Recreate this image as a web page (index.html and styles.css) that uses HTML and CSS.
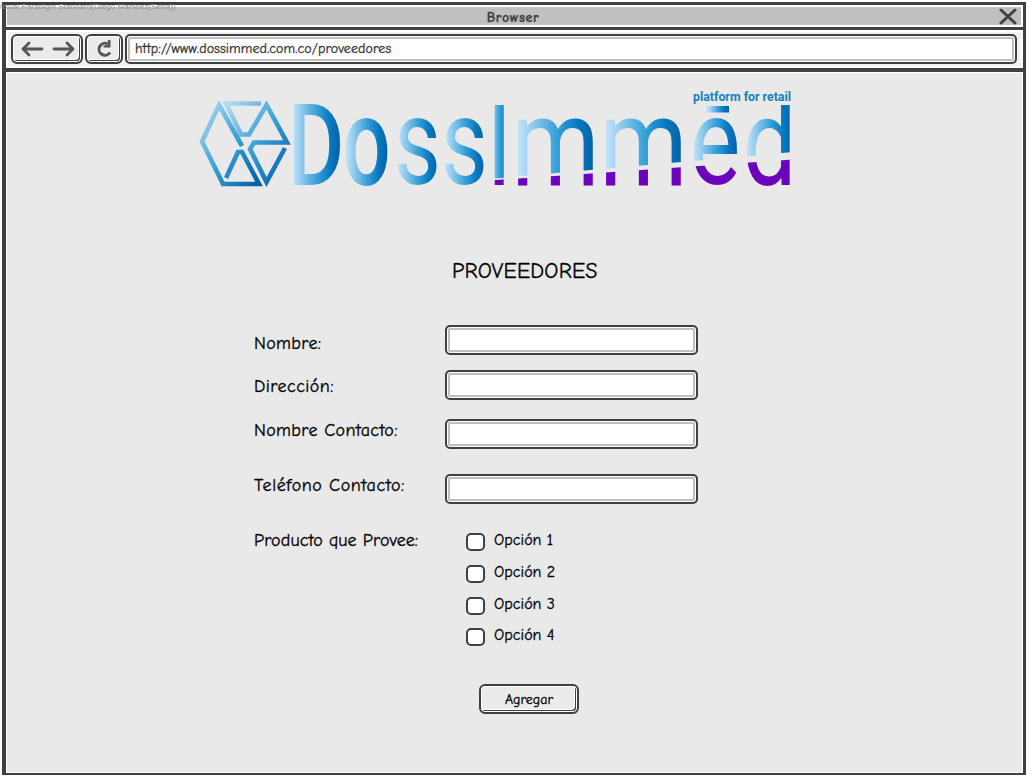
FILE: index.html
```html
<!DOCTYPE html>
<html lang="es">
<head>
<meta charset="utf-8">
<title>Proveedores</title>
<link rel="stylesheet" href="styles.css">
</head>
<body>
<div class="watermark">Visual Paradigm Standard(Diego Martinez(Sena))</div>
<div class="window">
  <header class="titlebar">
    <span class="title">Browser</span>
    <svg class="close" width="18" height="17" viewBox="0 0 18 17"><path d="M2 2L16 15M16 2L2 15"/></svg>
  </header>
  <nav class="toolbar">
    <div class="tool history">
      <svg width="54" height="16" viewBox="0 0 54 16"><path d="M21 8H2M8 2L2 8L8 14M33 8H52M46 2L52 8L46 14"/></svg>
    </div>
    <div class="tool reload">
      <svg width="18" height="18" viewBox="0 0 18 18"><path class="arc" d="M12.500 3.800A6 6 0 1 0 15 12.500"/><path class="tip" d="M15.500 0V7.500H8.500V5.500L12.500 5L13 0Z"/></svg>
    </div>
    <div class="address"><span class="url">http://www.dossimmed.com.co/proveedores</span></div>
  </nav>
  <main class="page">
    <svg class="logo" width="600" height="100" viewBox="196 90 600 100">
      <defs>
        <linearGradient id="ink"><stop offset=".1" stop-color="#bfe0f7"/><stop offset=".5" stop-color="#3ba3da"/><stop offset=".75" stop-color="#0878c0"/><stop offset="1" stop-color="#005a9e"/></linearGradient>
        <linearGradient id="edge" x1="0" y1="0" x2="1" y2="1"><stop offset="0" stop-color="#b5dbf3"/><stop offset=".5" stop-color="#3ba0d7"/><stop offset="1" stop-color="#005da5"/></linearGradient>
        <clipPath id="upper"><path d="M280 105H800V151.500L495 178.500L280 190Z"/></clipPath>
        <clipPath id="lower"><path d="M490 180.500L800 159V190H490Z"/></clipPath>
      </defs>
      <g class="emblem" stroke="url(#edge)">
        <path d="M242 146L219 105L202 141.500L223 184H259L242 152H238L226 178"/>
        <path d="M261 103.500H226L241 134.500H249L266.500 105L287 142.500H254L250 149L266.500 182L285 148"/>
      </g>
      <g class="word" fill="url(#ink)">
        <text class="heavy" transform="translate(287.500 185) scale(.87 1.125)">D</text>
        <text class="heavy" transform="translate(342.300 184.800) scale(.851 1.250)">o</text>
        <text transform="translate(393.800 184) scale(.915 1.220)">s</text>
        <text transform="translate(440.800 184) scale(.915 1.220)">s</text>
        <g clip-path="url(#upper)">
          <text id="l1" transform="translate(486.200 185) scale(.95 1.125)">I</text>
          <text id="l2" transform="translate(511.200 185) scale(1.008 1.245)">m</text>
          <text id="l3" transform="translate(599.200 185) scale(1.008 1.245)">m</text>
          <text id="l4" transform="translate(689.600 184) scale(.96 1.220)">e</text>
          <text id="l5" transform="translate(742.600 184.500) scale(.958 1.220)">d</text>
        </g>
        <rect x="706" y="106" width="23" height="6.500"/>
      </g>
      <g class="word" fill="#6a05bd" clip-path="url(#lower)">
        <use href="#l1"/><use href="#l2"/><use href="#l3"/><use href="#l4"/><use href="#l5"/>
      </g>
      <text class="tagline" x="693" y="101" textLength="98" lengthAdjust="spacingAndGlyphs">platform for retail</text>
    </svg>
    <h1 class="heading">PROVEEDORES</h1>
    <form class="form">
      <label class="label nombre">Nombre:</label><div class="field"></div>
      <label class="label direccion">Dirección:</label><div class="field"></div>
      <label class="label contacto">Nombre Contacto:</label><div class="field"></div>
      <label class="label telefono">Teléfono Contacto:</label><div class="field"></div>
      <span class="label producto">Producto que Provee:</span>
      <div class="options">
        <div class="option"><i class="box"></i><span>Opción 1</span></div>
        <div class="option"><i class="box"></i><span>Opción 2</span></div>
        <div class="option"><i class="box"></i><span>Opción 3</span></div>
        <div class="option"><i class="box"></i><span>Opción 4</span></div>
      </div>
    </form>
    <div class="submit"><span>Agregar</span></div>
  </main>
</div>
</body>
</html>
```
FILE: styles.css
```css
* { box-sizing: border-box; }
body {
  margin: 0;
  width: 1030px;
  height: 779px;
  padding: 2px 4px 4px 2px;
  overflow: hidden;
  background: #fff;
  color: #000;
  font-family: "Comic Sans MS", "Comic Neue", "Noto Sans", sans-serif;
  -webkit-text-stroke: .3px currentColor;
}
.watermark {
  position: absolute;
  left: -3px;
  top: 2px;
  font: 8px/10px "Liberation Sans", sans-serif;
  letter-spacing: .06px;
  -webkit-text-stroke: 0;
  color: #929292;
  white-space: nowrap;
}
.window {
  width: 1024px;
  height: 773px;
  border: solid #404040;
  border-width: 3px 3px 2px 4px;
  display: flex;
  flex-direction: column;
}
.titlebar {
  height: 22px;
  flex: none;
  border: solid #fff;
  border-width: 2px 2px 2px 1px;
  background: #c0c0c0;
  display: flex;
  justify-content: center;
  align-items: center;
}
.title {
  margin-left: auto;
  padding: 3px 0 0 20px;
  font-size: 14px;
  font-weight: 700;
  line-height: 18px;
  letter-spacing: .6px;
  color: #404040;
}
.close { margin: 0 4px 0 auto; }
.close path { stroke: #404040; stroke-width: 3; stroke-linecap: round; fill: none; }
.toolbar {
  height: 45px;
  flex: none;
  border-top: 3px solid #404040;
  border-bottom: 4px solid #404040;
  background: #f1f1f1;
  box-shadow: inset 0 0 0 2px #fff;
  padding: 4px 6px 0 5px;
  display: flex;
  gap: 2px;
}
.tool {
  height: 30px;
  border: 2px solid #404040;
  border-radius: 6px;
  background: #ebebeb;
  box-shadow: inset 0 0 0 1px #fff, inset -2px -2px 0 #404040, inset -2px -2px 0 1px #fff;
  display: flex;
  align-items: center;
  justify-content: center;
}
.history { width: 72px; padding-left: 1px; }
.reload { width: 38px; padding-right: 1px; }
.tool path { stroke: #555; stroke-width: 2.8; stroke-linecap: round; stroke-linejoin: round; fill: none; }
.tool .arc { stroke-width: 3; stroke-linecap: butt; }
.tool .tip { fill: #555; stroke: none; }
.address {
  flex: 1;
  height: 30px;
  border: 2px solid #404040;
  border-radius: 5px;
  background: #fff;
  box-shadow: inset 0 0 0 1px #fff, inset 0 0 0 3px #bfbfbf;
  padding-left: 8px;
}
.url { font-size: 14px; line-height: 25px; color: #333; letter-spacing: .08px; }
.page {
  flex: 1;
  background: #e9e9e9;
  box-shadow: inset 0 0 0 1px #fff;
  padding-top: 18px;
  display: flex;
  flex-direction: column;
  align-items: flex-start;
}
.logo { margin-left: 190px; display: block; -webkit-text-stroke: 0; }
.word { font: 400 100px Roboto, sans-serif; }
.heavy { font-weight: 500; }
.emblem { fill: none; stroke-width: 4.6; }
.tagline { font: 700 12px Roboto, sans-serif; fill: #1681be; }
.heading {
  margin: 67px 0 0 446px;
  height: 28px;
  font-size: 22px;
  font-weight: 400;
  line-height: 28px;
  letter-spacing: .15px;
  white-space: nowrap;
}
.form {
  margin: 40px 0 0 248px;
  display: grid;
  grid-template-columns: 191px 253px;
  grid-template-rows: 45px 49px 55px 59px 115px;
  align-items: start;
}
.label { font-size: 18px; line-height: 24px; letter-spacing: .1px; white-space: nowrap; }
.nombre { margin-top: 7px; letter-spacing: .35px; }
.direccion { margin-top: 5px; letter-spacing: .45px; }
.contacto { margin-top: 0; letter-spacing: .35px; }
.telefono { margin-top: 0; letter-spacing: .6px; }
.producto { margin-top: -4px; }
.field {
  height: 30px;
  border: 2px solid #404040;
  border-radius: 5px;
  background: #fff;
  box-shadow: inset 0 0 0 1px #fff, inset 0 0 0 3px #bfbfbf;
}
.options { padding-left: 21px; display: grid; grid-template-rows: 32px 32px 31px 20px; }
.option { height: 18px; display: flex; gap: 9px; font-size: 16px; line-height: 15px; }
.box { width: 19px; height: 18px; border: 2px solid #404040; border-radius: 5px; background: #fff; }
.submit {
  margin: 36px 0 0 473px;
  width: 100px;
  height: 30px;
  border: 2px solid #404040;
  border-radius: 6px;
  background: #ebebeb;
  box-shadow: inset 0 0 0 1px #fff, inset -2px -2px 0 #404040, inset -2px -2px 0 1px #fff;
  font-size: 14px;
  line-height: 27px;
  text-align: center;
}
```
